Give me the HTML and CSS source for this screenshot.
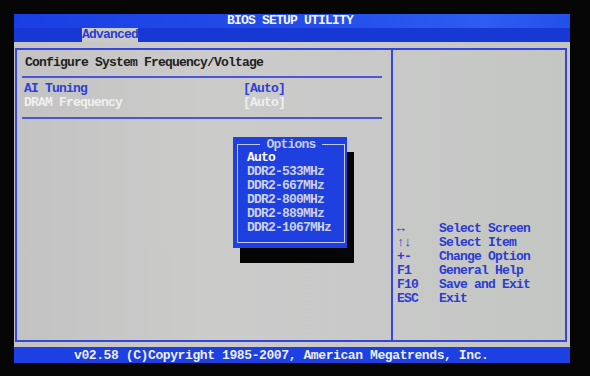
FILE: index.html
```html
<!DOCTYPE html>
<html>
<head>
<meta charset="utf-8">
<link rel="stylesheet" href="styles.css">
</head>
<body>
<div class="screen">
  <div class="title">BIOS SETUP UTILITY</div>
  <div class="tabs"><span class="tab">Advanced</span></div>
  <div class="main">
    <div class="frame">
      <div class="left">
        <div class="heading">Configure System Frequency/Voltage</div>
        <div class="sep"></div>
        <div class="row sel"><span class="name">AI Tuning</span><span class="val">[Auto]</span></div>
        <div class="row dim"><span class="name">DRAM Frequency</span><span class="val">[Auto]</span></div>
        <div class="sep sep2"></div>
      </div>
      <div class="right">
        <div class="help">
          <span class="key">&#8596;</span><span>Select Screen</span>
          <span class="key">&#8593;&#8595;</span><span>Select Item</span>
          <span class="key">+-</span><span>Change Option</span>
          <span class="key">F1</span><span>General Help</span>
          <span class="key">F10</span><span>Save and Exit</span>
          <span class="key">ESC</span><span>Exit</span>
        </div>
      </div>
    </div>
    <div class="popup">
      <div class="popup-inner">
        <div class="popup-title"><span>Options</span></div>
        <ul class="options">
          <li class="cur">Auto</li>
          <li>DDR2-533MHz</li>
          <li>DDR2-667MHz</li>
          <li>DDR2-800MHz</li>
          <li>DDR2-889MHz</li>
          <li>DDR2-1067MHz</li>
        </ul>
      </div>
    </div>
  </div>
  <div class="footer">v02.58 (C)Copyright 1985-2007, American Megatrends, Inc.</div>
</div>
</body>
</html>
```
FILE: styles.css
```css
html, body {
  margin: 0;
  padding: 0;
  background: #060606;
  width: 590px;
  height: 376px;
  overflow: hidden;
}
body {
  font-family: "Liberation Mono", "DejaVu Sans Mono", monospace;
  font-size: 13px;
  font-weight: bold;
  letter-spacing: -0.8px;
  line-height: 14px;
}
.screen {
  margin: 14px 0 0 14px;
  width: 556px;
  display: flex;
  flex-direction: column;
}
.title {
  height: 14px;
  background: linear-gradient(90deg, #1a3ee2 0%, #2450ec 60%, #2c5cf2 85%, #2450ea 100%);
  color: #f2f2f2;
  text-align: center;
  padding-right: 4px;
}
.tabs {
  height: 14px;
  background: #1838d6;
  padding-left: 68px;
}
.tab {
  display: inline-block;
  background: #c8cac8;
  color: #2a3cd0;
  width: 56px;
  height: 14px;
}
.main {
  position: relative;
  height: 305px;
  background: linear-gradient(90deg, #c2c3c2 0%, #cbcbca 35%, #c8c9c8 60%, #c4c6c4 100%);
  padding: 6px 0 0 1px;
  box-sizing: border-box;
}
.frame {
  width: 552px;
  height: 294px;
  box-sizing: border-box;
  border: 2px solid #3646d8;
  display: flex;
}
.left {
  width: 374px;
  padding-top: 6px;
}
.heading {
  color: #1e1e1e;
  padding-left: 8px;
}
.sep {
  margin: 6px 0 0 5px;
  width: 360px;
  height: 2px;
  background: #4a56d8;
}
.sep2 {
  margin-top: 7px;
}
.row {
  display: flex;
  padding-left: 7px;
}
.row.sel {
  margin-top: 4px;
}
.name {
  width: 219px;
}
.sel {
  color: #2c3fd6;
}
.dim {
  color: #f0f0f0;
}
.right {
  flex: 1;
  border-left: 2px solid #3646d8;
  padding: 172px 0 0 4px;
}
.help {
  display: grid;
  grid-template-columns: 42px auto;
  color: #2a3cd2;
}
.popup {
  position: absolute;
  left: 219px;
  top: 95px;
  width: 114px;
  height: 111px;
  background: #1f40e0;
  box-shadow: 7px 15px 0 #050505;
  box-sizing: border-box;
  padding: 7px 2px 5px 4px;
}
.popup-inner {
  border: 1px solid #c4c8e4;
  height: 100%;
  box-sizing: border-box;
  position: relative;
}
.popup-title {
  position: absolute;
  top: -7px;
  left: 0;
  right: 0;
  text-align: center;
  color: #c8cce6;
}
.popup-title span {
  background: #1f40e0;
  padding: 0 6px;
}
.options {
  list-style: none;
  margin: 0;
  padding: 6px 0 0 9px;
  color: #cdd1e8;
}
.options .cur {
  color: #ffffff;
}
.footer {
  height: 16px;
  line-height: 17px;
  background: #1c40e2;
  color: #eeeeee;
  padding-left: 60px;
  letter-spacing: -0.4px;
}
```
